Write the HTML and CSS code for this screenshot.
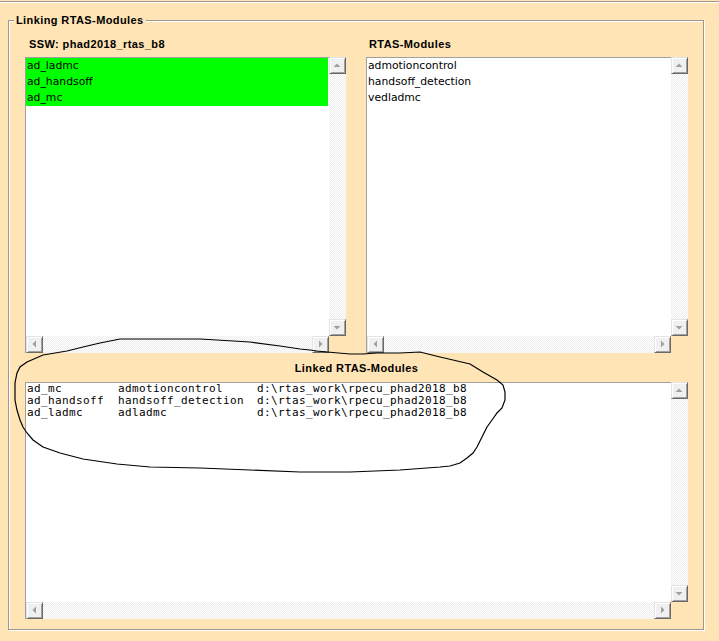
FILE: index.html
```html
<!DOCTYPE html>
<html>
<head>
<meta charset="utf-8">
<link rel="stylesheet" href="styles.css">
</head>
<body>
<div class="window">
  <div class="group">
    <div class="legend">Linking RTAS-Modules</div>
    <div class="top-row">
      <div class="col">
        <div class="label label-left">SSW: phad2018_rtas_b8</div>
        <div class="listbox small">
          <div class="lb-content">
            <div class="item sel">ad_ladmc</div>
            <div class="item sel">ad_handsoff</div>
            <div class="item sel">ad_mc</div>
          </div>
          <div class="vscroll">
            <div class="sbtn"><svg width="15" height="15" viewBox="0 0 15 15"><polygon points="3.5,9 10.5,9 7,5.5" class="arr"/></svg></div>
            <div class="track"></div>
            <div class="sbtn"><svg width="15" height="15" viewBox="0 0 15 15"><polygon points="3.5,6 10.5,6 7,9.5" class="arr"/></svg></div>
          </div>
          <div class="hscroll">
            <div class="sbtn"><svg width="15" height="15" viewBox="0 0 15 15"><polygon points="9,3.5 9,10.5 5.5,7" class="arr"/></svg></div>
            <div class="track"></div>
            <div class="sbtn"><svg width="15" height="15" viewBox="0 0 15 15"><polygon points="6,3.5 6,10.5 9.5,7" class="arr"/></svg></div>
          </div>
        </div>
      </div>
      <div class="col">
        <div class="label label-right">RTAS-Modules</div>
        <div class="listbox small">
          <div class="lb-content">
            <div class="item">admotioncontrol</div>
            <div class="item">handsoff_detection</div>
            <div class="item">vedladmc</div>
          </div>
          <div class="vscroll">
            <div class="sbtn"><svg width="15" height="15" viewBox="0 0 15 15"><polygon points="3.5,9 10.5,9 7,5.5" class="arr"/></svg></div>
            <div class="track"></div>
            <div class="sbtn"><svg width="15" height="15" viewBox="0 0 15 15"><polygon points="3.5,6 10.5,6 7,9.5" class="arr"/></svg></div>
          </div>
          <div class="hscroll">
            <div class="sbtn"><svg width="15" height="15" viewBox="0 0 15 15"><polygon points="9,3.5 9,10.5 5.5,7" class="arr"/></svg></div>
            <div class="track"></div>
            <div class="sbtn"><svg width="15" height="15" viewBox="0 0 15 15"><polygon points="6,3.5 6,10.5 9.5,7" class="arr"/></svg></div>
          </div>
        </div>
      </div>
    </div>
    <div class="label label-center">Linked RTAS-Modules</div>
    <div class="listbox big">
      <div class="lb-content mono">
        <div class="mrow"><span class="c1">ad_mc</span><span class="c2">admotioncontrol</span><span>d:\rtas_work\rpecu_phad2018_b8</span></div>
        <div class="mrow"><span class="c1">ad_handsoff</span><span class="c2">handsoff_detection</span><span>d:\rtas_work\rpecu_phad2018_b8</span></div>
        <div class="mrow"><span class="c1">ad_ladmc</span><span class="c2">adladmc</span><span>d:\rtas_work\rpecu_phad2018_b8</span></div>
      </div>
      <div class="vscroll">
        <div class="sbtn"><svg width="15" height="15" viewBox="0 0 15 15"><polygon points="3.5,9 10.5,9 7,5.5" class="arr"/></svg></div>
        <div class="track"></div>
        <div class="sbtn"><svg width="15" height="15" viewBox="0 0 15 15"><polygon points="3.5,6 10.5,6 7,9.5" class="arr"/></svg></div>
      </div>
      <div class="hscroll">
        <div class="sbtn"><svg width="15" height="15" viewBox="0 0 15 15"><polygon points="9,3.5 9,10.5 5.5,7" class="arr"/></svg></div>
        <div class="track"></div>
        <div class="sbtn"><svg width="15" height="15" viewBox="0 0 15 15"><polygon points="6,3.5 6,10.5 9.5,7" class="arr"/></svg></div>
      </div>
    </div>
  </div>
  <svg class="annot" width="719" height="641" viewBox="0 0 719 641">
    <polyline fill="none" stroke="#000" stroke-width="1.2" points="15,387 15,383 17,373 20,367 27,362 43,355 67,351 83,347 100,343 120,339 200,339 250,342 280,346 300,349 310,350 317,351 327,352 350,354 363,354 377,353 400,353 420,352 440,357 453,360 470,364 483,372 497,380 503,385 505,392 505,400 502,408 497,413 492,420 487,427 482,437 477,447 473,453 467,458 460,463 450,466 440,467 400,470 350,472 300,472 250,470 200,468 150,467 117,464 83,459 60,453 43,447 33,440 27,433 23,427 20,420 17,410 15,400 15,387"/>
  </svg>
</div>
</body>
</html>
```
FILE: styles.css
```css
html, body {
  margin: 0;
  padding: 0;
}
body {
  background: #ffe4b5;
  width: 719px;
  height: 641px;
  overflow: hidden;
}
.window {
  position: relative;
  width: 719px;
  height: 641px;
  padding-top: 1px;
  box-sizing: border-box;
}
.window::before {
  content: "";
  display: block;
  border-top: 1px solid #9d978d;
  border-bottom: 1px solid #fff;
}
.group {
  position: relative;
  margin: 17px 0 0 8px;
  width: 696px;
  box-sizing: border-box;
  border: 1px solid #9d978d;
  box-shadow: inset 1px 1px 0 #fff, 1px 1px 0 #fff;
  padding: 15px 15px 10px 16px;
}
.legend {
  position: absolute;
  left: 5px;
  top: -9px;
  padding: 0 2px;
  background: #ffe4b5;
  line-height: 16px;
  font-family: "Liberation Sans", Arial, sans-serif;
  font-weight: bold;
  font-size: 11px;
  letter-spacing: 0.4px;
  color: #000;
}
.label {
  font-family: "Liberation Sans", Arial, sans-serif;
  font-weight: bold;
  font-size: 11px;
  letter-spacing: 0.4px;
  line-height: 16px;
  height: 16px;
  color: #000;
  white-space: nowrap;
}
.label-left { padding-left: 4px; margin-bottom: 5px; }
.label-right { padding-left: 3px; margin-bottom: 5px; }
.label-center { text-align: center; margin: 7px 0 6px; }
.top-row {
  display: grid;
  grid-template-columns: 321px 322px;
  column-gap: 20px;
}
.listbox {
  display: grid;
  grid-template-columns: 1fr 17px;
  grid-template-rows: 1fr 17px;
}
.listbox.small { height: 296px; }
.listbox.big { height: 237px; }
.lb-content {
  grid-row: 1;
  grid-column: 1;
  background: #fff;
  border-top: 1px solid #a0a0a0;
  border-left: 1px solid #a0a0a0;
  overflow: hidden;
  font-family: "DejaVu Sans", Verdana, sans-serif;
  font-size: 10.8px;
  color: #000;
}
.item {
  height: 16px;
  line-height: 16px;
  padding-left: 1px;
  margin-right: 1px;
  white-space: nowrap;
}
.item.sel { background: #00ff00; }
.vscroll {
  grid-row: 1;
  grid-column: 2;
  display: flex;
  flex-direction: column;
}
.hscroll {
  grid-row: 2;
  grid-column: 1;
  display: flex;
  border-left: 1px solid #a0a0a0;
}
.track {
  flex: 1;
  background-color: #fff;
  background-image: repeating-conic-gradient(#ffffff 0 25%, #ededed 0 50%);
  background-size: 2px 2px;
}
.sbtn {
  flex: none;
  width: 17px;
  height: 17px;
  box-sizing: border-box;
  background: #f0f0f0;
  border: 1px solid;
  border-color: #e3e3e3 #696969 #696969 #e3e3e3;
  box-shadow: inset 1px 1px 0 #fff, inset -1px -1px 0 #a0a0a0;
}
.sbtn svg { display: block; }
.arr { fill: #a0a0a0; }
.mono {
  font-family: "DejaVu Sans Mono", "Liberation Mono", monospace;
  font-size: 11px;
  letter-spacing: 0.38px;
  padding-top: 0;
}
.mrow {
  display: grid;
  grid-template-columns: 91px 139px auto;
  height: 12px;
  line-height: 12px;
  padding-left: 1px;
  white-space: nowrap;
}
.annot {
  position: absolute;
  left: 0;
  top: 0;
  pointer-events: none;
}
```
